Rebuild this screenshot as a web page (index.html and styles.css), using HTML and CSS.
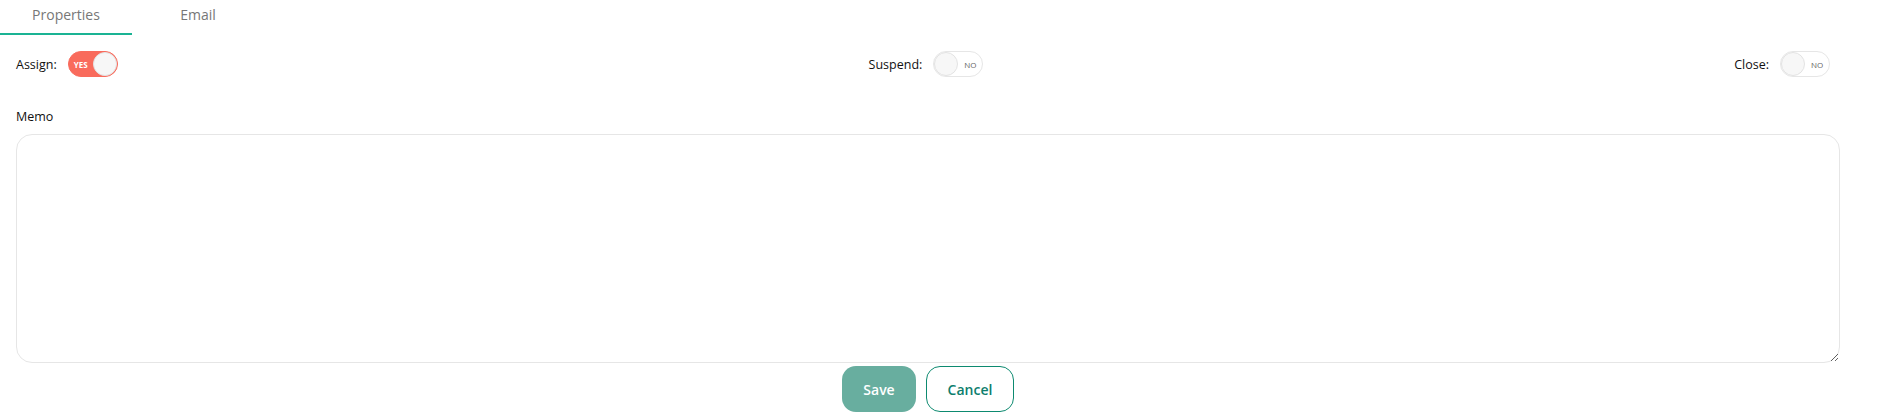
FILE: index.html
```html
<!DOCTYPE html>
<html>
<head>
<meta charset="utf-8">
<link rel="stylesheet" href="styles.css">
</head>
<body>
<div class="tabs">
  <div class="tab active">Properties</div>
  <div class="tab">Email</div>
</div>
<div class="content">
  <div class="toggles">
    <div class="field">
      <span class="label">Assign:</span>
      <span class="switch on"><span class="txt">YES</span><span class="knob"></span></span>
    </div>
    <div class="field">
      <span class="label">Suspend:</span>
      <span class="switch"><span class="knob"></span><span class="txt">NO</span></span>
    </div>
    <div class="field">
      <span class="label">Close:</span>
      <span class="switch"><span class="knob"></span><span class="txt">NO</span></span>
    </div>
  </div>
  <div class="memo-label">Memo</div>
  <textarea class="memo"></textarea>
  <div class="actions">
    <button class="btn save">Save</button>
    <button class="btn cancel">Cancel</button>
  </div>
</div>
</body>
</html>
```

FILE: styles.css
```css
html, body {
  margin: 0;
  padding: 0;
  background: #fff;
  font-family: "Open Sans", "DejaVu Sans", sans-serif;
}
.tabs {
  display: flex;
  height: 35px;
}
.tab {
  width: 132px;
  box-sizing: border-box;
  text-align: center;
  font-size: 14px;
  color: #777;
  padding-top: 5px;
  height: 35px;
}
.tab.active {
  border-bottom: 2px solid #1ab394;
}
.content {
  padding: 0 43px 0 16px;
}
.toggles {
  display: flex;
  justify-content: space-between;
  align-items: center;
  padding-right: 10px;
  margin-top: 16px;
  height: 26px;
}
.field {
  display: flex;
  align-items: center;
  gap: 11px;
}
.label {
  font-size: 12.5px;
  color: #111;
}
.switch {
  width: 50px;
  height: 26px;
  box-sizing: border-box;
  border-radius: 13px;
  border: 1px solid #e6e6e6;
  background: #fff;
  display: flex;
  align-items: center;
  justify-content: space-between;
  padding: 0;
}
.switch .knob {
  width: 24px;
  height: 24px;
  border-radius: 50%;
  background: #f7f7f7;
  border: 1px solid #e3e3e3;
  box-sizing: border-box;
}
.switch .txt {
  font-size: 8px;
  color: #666;
  flex: 1;
  text-align: center;
}
.switch.on {
  background: #f96b5c;
  border-color: #f96b5c;
}
.switch.on .txt {
  color: #fff;
  font-weight: 700;
}
.memo-label {
  margin-top: 31px;
  font-size: 12.5px;
  color: #111;
  height: 16px;
}
.memo {
  display: block;
  margin-top: 10px;
  width: 100%;
  height: 229px;
  box-sizing: border-box;
  border: 1px solid #e6e6e6;
  border-radius: 16px;
  resize: vertical;
  outline: none;
}
.actions {
  display: flex;
  justify-content: center;
  gap: 10px;
  margin-top: 3px;
}
.btn {
  height: 46px;
  border-radius: 14px;
  font-family: "Open Sans", "DejaVu Sans", sans-serif;
  font-size: 14px;
  font-weight: 600;
  box-sizing: border-box;
}
.save {
  width: 74px;
  background: #68ae9f;
  color: #fff;
  border: none;
}
.cancel {
  width: 88px;
  background: #fff;
  color: #0d7e6d;
  border: 1px solid #0d8a70;
}
```
